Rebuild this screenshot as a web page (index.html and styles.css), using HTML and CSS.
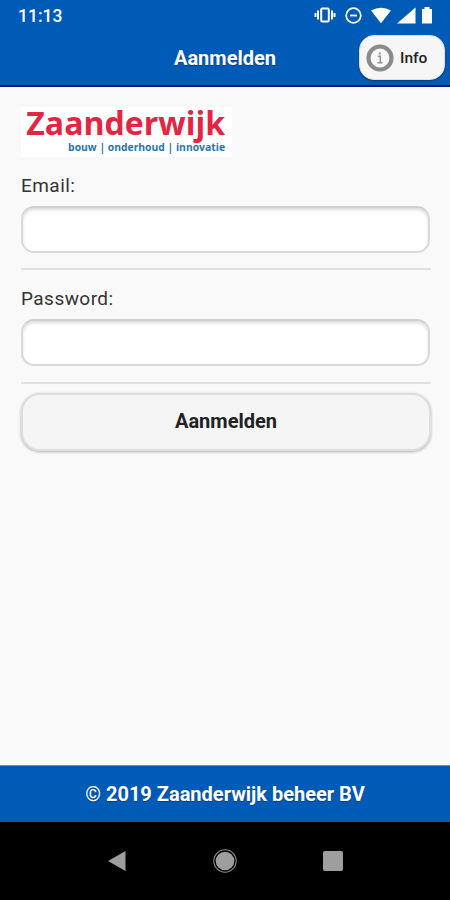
FILE: index.html
```html
<!DOCTYPE html>
<html lang="nl">
<head>
<meta charset="utf-8">
<title>Aanmelden</title>
<link rel="stylesheet" href="styles.css">
</head>
<body>
<div class="status-bar">
  <span class="clock">11:13</span>
  <svg class="status-icons" width="122" height="20" viewBox="0 0 122 20" fill="#fff">
    <rect x="7.2" y="2.5" width="7.6" height="13" rx="1.2" fill="none" stroke="#fff" stroke-width="2"/>
    <path d="M4 4.500v9M18 4.500v9M1.500 7v4M20.500 7v4" stroke="#fff" stroke-width="2"/>
    <circle cx="39.5" cy="9.5" r="7.3" fill="none" stroke="#fff" stroke-width="1.7"/>
    <path d="M36 9.5h7" stroke="#fff" stroke-width="1.8"/>
    <path d="M57 4.500Q67 -1 77 4.500L67 17.300Z"/>
    <path d="M83 17.500L101.500 1.500V17.500Z"/>
    <path d="M110.500 1h5v2h2.500v14.500h-10V3h2.500Z"/>
  </svg>
</div>
<header class="header">
  <h1>Aanmelden</h1>
  <button class="info" type="button">
    <svg width="28" height="28" viewBox="0 0 28 28">
      <circle cx="14" cy="14" r="11.500" fill="#fafafa" stroke="#8b8b8b" stroke-width="4.200"/>
      <path d="M11.800 12.200h2.500v6.500M11.500 18.700h5" fill="none" stroke="#929292" stroke-width="1.500"/>
      <rect x="12.700" y="8.500" width="2" height="2" fill="#929292"/>
    </svg>
    <span>Info</span>
  </button>
</header>
<main class="content">
  <div class="logo">
    <div class="logo-name">Zaanderwijk</div>
    <div class="logo-tagline">bouw | onderhoud | innovatie</div>
  </div>
  <form>
    <div class="field">
      <label for="email">Email:</label>
      <input id="email" type="email">
    </div>
    <div class="field">
      <label for="password">Password:</label>
      <input id="password" type="password">
    </div>
    <button class="submit" type="button">Aanmelden</button>
  </form>
</main>
<footer class="footer">© 2019 Zaanderwijk beheer BV</footer>
<nav class="nav-bar">
  <svg width="24" height="24" viewBox="0 0 24 24" fill="#9e9e9e"><path d="M3 12L20.500 2V22Z"/></svg>
  <svg width="24" height="24" viewBox="0 0 24 24" fill="#9e9e9e"><circle cx="12" cy="12" r="9.300"/><circle cx="12" cy="12" r="11.200" fill="none" stroke="#8c8c8c" stroke-width="1.100"/></svg>
  <svg width="24" height="24" viewBox="0 0 24 24" fill="#9e9e9e"><rect x="2" y="2" width="20" height="20" rx="2"/></svg>
</nav>
</body>
</html>
```
FILE: styles.css
```css
* {
  box-sizing: border-box;
}

body {
  margin: 0;
  height: 900px;
  display: flex;
  flex-direction: column;
  overflow: hidden;
  background: #f9f9f9;
  color: #333;
  font-family: Roboto, sans-serif;
}

button {
  font-family: inherit;
}

.status-bar {
  height: 32px;
  padding: 0 14px 0 18px;
  display: flex;
  justify-content: space-between;
  background: #005bb7;
  color: #fff;
}

.clock {
  font-size: 17.5px;
  font-weight: 500;
  line-height: 33px;
}

.status-icons {
  margin-top: 6px;
}

.header {
  height: 55px;
  padding: 3px 5px 0 0;
  display: grid;
  grid-template-columns: 1fr auto 1fr;
  align-items: start;
  background: #005bb7;
  border-bottom: 2px solid #00107e;
}

.header h1 {
  grid-column: 2;
  margin: 0 0 0 5px;
  font-size: 20px;
  font-weight: 700;
  line-height: 46px;
  color: #fff;
  text-shadow: 0 1px 1px #0b3c7b;
}

.info {
  justify-self: end;
  width: 86px;
  height: 45px;
  padding: 0 0 0 6px;
  display: flex;
  align-items: center;
  gap: 6px;
  border: 1px solid #dedede;
  border-radius: 15px;
  background: #f6f6f6;
  box-shadow: 0 1px 2px rgba(0, 0, 0, 0.35);
  color: #222;
  font-size: 15.5px;
  font-weight: 500;
}

.info svg {
  flex: none;
}

.content {
  flex: 1;
  padding: 20px 19px 0 21px;
}

.logo {
  width: 211px;
  height: 50px;
  padding-right: 7px;
  background: #fff;
  font-family: "Open Sans", sans-serif;
  font-weight: 700;
  text-align: right;
  white-space: nowrap;
}

.logo-name {
  height: 34px;
  color: #e52441;
  font-size: 32px;
  line-height: 32px;
}

.logo-tagline {
  color: #2875ae;
  font-size: 10.35px;
  line-height: 13px;
}

.field {
  height: 113px;
  padding-top: 17px;
  border-bottom: 2px solid #e0e0e0;
}

.field + .field {
  height: 114px;
}

.field label {
  display: block;
  height: 32px;
  font-size: 19px;
  line-height: 23px;
  letter-spacing: 0.45px;
}

.field input {
  display: block;
  width: 409px;
  height: 47px;
  border: 2px solid #dadada;
  border-top-color: #d0d0d0;
  border-radius: 13px;
  background: #fff;
  box-shadow: inset 0 2px 3px rgba(0, 0, 0, 0.14);
}

.submit {
  display: block;
  width: 410px;
  height: 58px;
  margin-top: 9px;
  padding: 0 0 2px;
  border: 2px solid #dedede;
  border-radius: 19px;
  background: #f5f5f5;
  box-shadow: 0 1px 3px rgba(0, 0, 0, 0.3);
  color: #222;
  font-size: 20px;
  font-weight: 700;
}

.footer {
  height: 57px;
  border-top: 1px solid #6d8cac;
  background: #005bb7;
  color: #fff;
  font-size: 20px;
  font-weight: 700;
  line-height: 56px;
  text-align: center;
  text-shadow: 0 1px 1px #0b3c7b;
}

.nav-bar {
  height: 78px;
  padding-right: 1px;
  display: flex;
  justify-content: center;
  align-items: center;
  gap: 84px;
  background: #000;
}
```
